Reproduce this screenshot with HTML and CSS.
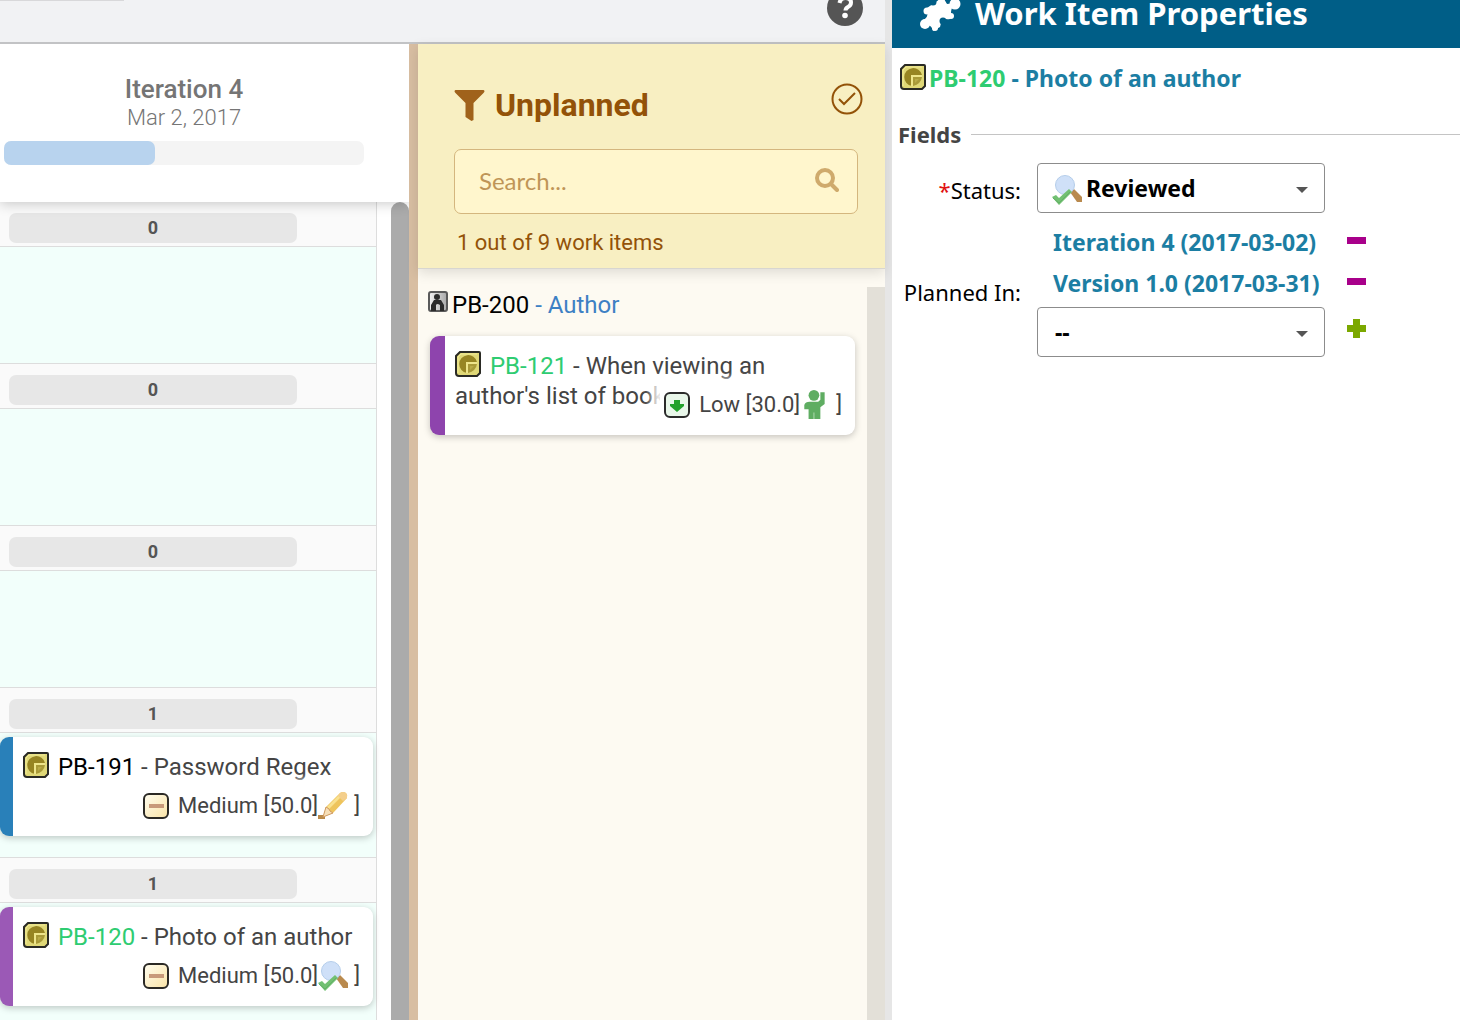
FILE: index.html
```html
<!DOCTYPE html>
<html lang="en">
<head>
  <meta charset="UTF-8">
  <meta name="viewport" content="width=device-width, initial-scale=1.0">
  <title>Plan - Work Item Properties</title>
  <link rel="stylesheet" href="styles.css">
</head>
<body>

  <!-- Shared icons -->
  <svg class="sprite" aria-hidden="true">
    <defs>
      <linearGradient id="sand" x1="0" y1="0" x2="1" y2="1">
        <stop offset="0" stop-color="#fffdf0"/>
        <stop offset="1" stop-color="#fae3a6"/>
      </linearGradient>
      <linearGradient id="silver" x1="0" y1="0" x2="1" y2="0">
        <stop offset="0" stop-color="#f4f4f4"/>
        <stop offset="1" stop-color="#a8a8a8"/>
      </linearGradient>
    </defs>
    <symbol id="story" viewBox="0 0 26 26">
      <path d="M5 1h19q1 0 1 1v20l-3 3H4q-3 0-3-3V5z" fill="#e0d877" stroke="#2a2a24" stroke-width="2"/>
      <path d="M3 22V6l3-3h16" fill="none" stroke="#f2ec9a" stroke-width="1"/>
      <path d="M12 22A9 9 0 1 1 22 11v1H12z" fill="#978523"/>
      <path d="M12 22V12h10" fill="none" stroke="#eee58b" stroke-width="2"/>
      <path d="M13 13h9q-1 7-9 9z" fill="#a99a38"/>
      <path d="M15 15h4l-4 4z" fill="#b9ab48"/>
    </symbol>
    <symbol id="medium" viewBox="0 0 26 26">
      <rect x="1" y="1" width="24" height="24" rx="5" fill="url(#sand)" stroke="#2b2925" stroke-width="2"/>
      <rect x="6" y="11" width="15" height="4" fill="#c8997a"/>
    </symbol>
    <symbol id="low" viewBox="0 0 26 26">
      <rect x="1" y="1" width="24" height="24" rx="5" fill="#e9f7ea" stroke="#2b2b2b" stroke-width="2"/>
      <path d="M10 8h6v4h4v2l-7 6-7-6v-2h4z" fill="#23a12c"/>
    </symbol>
    <symbol id="reviewed" viewBox="0 0 30 30">
      <path d="M18 17l4-3 8 8v5h-5z" fill="#b98a4e"/>
      <circle cx="13" cy="10" r="9.500" fill="#cfe0f8" stroke="#b4cdea" stroke-width="1"/>
      <path d="M0 22l4-2 3 3L17 14l3 3L7 30z" fill="#72c072"/>
      <path d="M1 23l6 5L18 17" fill="none" stroke="#62b066" stroke-width="1"/>
    </symbol>
    <symbol id="pencil" viewBox="0 0 30 28">
      <path d="M0 23h7v4H0z" fill="#b98a4a"/>
      <path d="M5 25l3-10L22 1q3-2 6 0 2 2 1 5L15 21z" fill="#eec45c"/>
      <path d="M9 15L22 2l3 1-14 14z" fill="#f9e18f"/>
      <path d="M5 25l3-10 3 2 1 2 3 2z" fill="#f6dfb8" stroke="#d09a62" stroke-width="1"/>
      <path d="M22 1q3-2 6 0 2 2 1 5l-4 3-5-5z" fill="#f4cf8c"/>
    </symbol>
    <symbol id="person" viewBox="0 0 20 28">
      <circle cx="9" cy="5" r="5" fill="#5fad62"/>
      <path d="M15 2h4v11l-4 3v11H4v-9H0v-4q1-3 5-3h8l2-2z" fill="#5fad62"/>
      <path d="M9 21v6" stroke="#a9d5aa" stroke-width="1"/>
    </symbol>
    <symbol id="actor" viewBox="0 0 20 22">
      <rect x="1" y="1" width="18" height="19" rx="2" fill="url(#silver)" stroke="#5a5a5a" stroke-width="2"/>
      <circle cx="9" cy="6" r="3" fill="#2c2c2c"/>
      <path d="M3 20v-6l3-5h7l3 5v6h-4v-6q-3-2-4 0v6z" fill="#2c2c2c"/>
    </symbol>
    <symbol id="puzzle" viewBox="0 0 42 32">
      <g fill="#fff">
        <path d="M8 9q6 3 7-3L23-4l5 8 8-1q-6 8-3 13l-2 3q-4 1-6-1-4 0-3 5l-1 4-7 4q-1-5-5-6L5 20q5-4 3-8z"/>
        <path d="M8 8l8 14 16-8L24-3z"/>
        <circle cx="6" cy="24" r="5"/>
        <circle cx="8" cy="11" r="3.500"/>
        <circle cx="36" cy="4" r="5.500"/>
        <circle cx="16" cy="28" r="3"/>
        <circle cx="32" cy="16" r="3"/>
      </g>
      <circle cx="14" cy="2" r="3.500" fill="#005e87"/>
      <circle cx="24" cy="21" r="3.500" fill="#005e87"/>
    </symbol>
    <symbol id="caret" viewBox="0 0 12 6">
      <path d="M0 0h12L6 6z" fill="#555"/>
    </symbol>
    <symbol id="minus" viewBox="0 0 19 7">
      <path d="M0 0h19v7H0z" fill="#a8008a"/>
    </symbol>
    <symbol id="plus" viewBox="0 0 19 19">
      <path d="M6 0h7v6h6v7h-6v6H6v-6H0V6h6z" fill="#7ba800"/>
    </symbol>
  </svg>

  <div class="page">
    <main class="planner">
      <header class="toolbar">
        <div class="tab"></div>
        <button class="help" type="button" aria-label="Help">
          <svg viewBox="0 0 36 36" width="36" height="36">
            <circle cx="18" cy="18" r="18" fill="#555"/>
            <path d="M12.500 13q1-5 6-5 5.500 0 5.500 4.500 0 3-3 4.500-2.500 1.500-2.500 3.500" fill="none" stroke="#fff" stroke-width="4"/>
            <circle cx="18" cy="25.500" r="2.800" fill="#fff"/>
          </svg>
        </button>
      </header>

      <div class="board">
        <section class="iteration">
          <header class="iteration-head">
            <h2>Iteration 4</h2>
            <time datetime="2017-03-02">Mar 2, 2017</time>
            <div class="progress"><div class="progress-done"></div></div>
          </header>

          <div class="lanes-wrap">
            <div class="lanes">
              <div class="lane-head"><span class="count">0</span></div>
              <div class="lane"></div>
              <div class="lane-head"><span class="count">0</span></div>
              <div class="lane"></div>
              <div class="lane-head"><span class="count">0</span></div>
              <div class="lane"></div>

              <div class="lane-head"><span class="count">1</span></div>
              <div class="lane">
                <article class="card blue">
                  <p class="card-title"><svg class="type"><use href="#story"/></svg> <a class="id" href="#">PB-191</a> - Password Regex</p>
                  <div class="details"><svg class="priority"><use href="#medium"/></svg><span>Medium [50.0]</span><svg class="state"><use href="#pencil"/></svg><span class="end">]</span></div>
                </article>
              </div>

              <div class="lane-head"><span class="count">1</span></div>
              <div class="lane">
                <article class="card violet">
                  <p class="card-title"><svg class="type"><use href="#story"/></svg> <a class="id green" href="#">PB-120</a> - Photo of an author</p>
                  <div class="details"><svg class="priority"><use href="#medium"/></svg><span>Medium [50.0]</span><svg class="state"><use href="#reviewed"/></svg><span class="end">]</span></div>
                </article>
              </div>
            </div>
            <div class="scrollbar"></div>
          </div>
        </section>

        <div class="splitter"></div>

        <section class="unplanned">
          <header class="unplanned-head">
            <div class="unplanned-title">
              <svg class="funnel" viewBox="0 0 30 31"><path d="M1 0h28q2 1 0 3L19 13v17l-2 1-6-4V13L1 3q-2-2 0-3z" fill="#a0621b"/></svg>
              <h2>Unplanned</h2>
              <button class="check" type="button" aria-label="Select all">
                <svg viewBox="0 0 32 32" width="32" height="32" fill="none" stroke="#935208" stroke-width="2">
                  <circle cx="16" cy="16" r="14.500"/>
                  <path d="M8 16l5 5L24 10"/>
                </svg>
              </button>
            </div>
            <label class="search">
              <input type="text" placeholder="Search..." aria-label="Search">
              <svg viewBox="0 0 24 24" fill="none" stroke="#cfaa6c" stroke-width="4">
                <circle cx="10" cy="10" r="8"/>
                <path d="M16 16l6 6" stroke-linecap="round"/>
              </svg>
            </label>
            <p class="summary">1 out of 9 work items</p>
          </header>

          <div class="unplanned-body">
            <div class="unplanned-list">
              <h3><svg class="actor"><use href="#actor"/></svg>PB-200 <a href="#">- Author</a></h3>
              <article class="card purple">
                <p class="card-title"><svg class="type"><use href="#story"/></svg> <a class="id green" href="#">PB-121</a> - When viewing an author's list of books</p>
                <div class="details"><svg class="priority"><use href="#low"/></svg><span>Low [30.0]</span><svg class="state"><use href="#person"/></svg><span class="end">]</span></div>
              </article>
            </div>
            <div class="track"></div>
          </div>
        </section>
      </div>
    </main>

    <aside class="properties">
      <header class="properties-head">
        <svg class="puzzle"><use href="#puzzle"/></svg>
        <h1>Work Item Properties</h1>
      </header>

      <div class="properties-body">
        <p class="item-title"><svg class="type"><use href="#story"/></svg><a href="#"><span class="green">PB-120</span> - Photo of an author</a></p>

        <h2 class="fields-title">Fields</h2>

        <form class="fields">
          <label for="status"><span class="required">*</span>Status:</label>
          <div class="select status">
            <svg class="state"><use href="#reviewed"/></svg>
            <select id="status">
              <option>Reviewed</option>
            </select>
            <svg class="caret"><use href="#caret"/></svg>
          </div>

          <label for="planned">Planned In:</label>
          <div class="planned">
            <div class="planned-row">
              <a href="#">Iteration 4 (2017-03-02)</a>
              <button type="button" aria-label="Remove Iteration 4"><svg class="minus"><use href="#minus"/></svg></button>
            </div>
            <div class="planned-row">
              <a href="#">Version 1.0 (2017-03-31)</a>
              <button type="button" aria-label="Remove Version 1.0"><svg class="minus"><use href="#minus"/></svg></button>
            </div>
            <div class="planned-row">
              <div class="select">
                <select id="planned">
                  <option>--</option>
                </select>
                <svg class="caret"><use href="#caret"/></svg>
              </div>
              <button type="button" aria-label="Add plan"><svg class="plus"><use href="#plus"/></svg></button>
            </div>
          </div>
        </form>
      </div>
    </aside>
  </div>

</body>
</html>
```

FILE: styles.css
```css
* {
  box-sizing: border-box;
}

body {
  margin: 0;
  font-family: Roboto, "Liberation Sans", sans-serif;
  font-size: 24px;
  color: #444;
  background: #fff;
}

h1, h2, h3, p {
  margin: 0;
}

a {
  color: inherit;
  text-decoration: none;
}

button {
  padding: 0;
  border: none;
  background: none;
  cursor: pointer;
}

svg {
  flex: none;
}

.sprite {
  position: absolute;
  width: 0;
  height: 0;
}

.page {
  display: grid;
  grid-template-columns: 885fr 7px 568fr;
  height: 100vh;
  overflow: hidden;
  background: #e6e6e6;
}

.planner {
  display: flex;
  flex-direction: column;
  min-width: 0;
  min-height: 0;
}

.toolbar {
  display: flex;
  flex: none;
  justify-content: space-between;
  align-items: flex-end;
  height: 44px;
  padding: 0 22px 16px 0;
  background: #f1f2f4;
  border-bottom: 2px solid #c2c3c5;
}

.tab {
  align-self: flex-start;
  width: 124px;
  border-bottom: 1px solid #d8d8da;
}

.help, .check {
  display: flex;
}

.board {
  display: grid;
  grid-template-columns: 409fr 9px 467fr;
  flex: 1;
  min-height: 0;
}

/* Iteration column */
.iteration {
  display: flex;
  flex-direction: column;
  min-width: 0;
  min-height: 0;
  overflow: hidden;
  background: #fff;
}

.iteration-head {
  position: relative;
  flex: none;
  height: 158px;
  padding: 30px 45px 0 4px;
  text-align: center;
  color: #757575;
  background: #fff;
  box-shadow: 0 2px 12px rgba(0, 0, 0, 0.2);
}

.iteration-head h2 {
  font-size: 26px;
  font-weight: 500;
  line-height: 30px;
}

.iteration-head time {
  display: block;
  font-size: 22px;
  font-weight: 300;
  line-height: 28px;
}

.progress {
  height: 24px;
  margin-top: 9px;
  border-radius: 7px;
  background: #f4f4f4;
}

.progress-done {
  width: 42%;
  height: 100%;
  border-radius: 7px;
  background: #b8d3ee;
}

.lanes-wrap {
  display: flex;
  flex: 1;
  min-height: 0;
  overflow: hidden;
}

.lanes {
  flex: 1;
  margin-right: 14px;
  border-right: 1px solid #ddd;
}

.scrollbar {
  width: 18px;
  border-radius: 9px 9px 0 0;
  background: #ababab;
}

.lane-head {
  height: 45px;
  padding: 11px 79px 0 9px;
  border-bottom: 1px solid #ddd;
  background: #fafafa;
}

.count {
  display: block;
  border-radius: 7px;
  background: #e7e7e7;
  font-size: 18px;
  font-weight: 700;
  line-height: 30px;
  text-align: center;
  color: #555;
}

.lane {
  min-height: 117px;
  padding: 4px 3px 21px 0;
  border-bottom: 1px solid #ddd;
  background: #f2fffb;
}

/* Cards */
.card {
  position: relative;
  height: 99px;
  padding: 15px 12px 0 10px;
  overflow: hidden;
  border-left: 13px solid;
  border-radius: 9px;
  background: #fff;
  box-shadow: 0 2px 7px rgba(0, 0, 0, 0.22);
}

.blue {
  border-color: #2980b9;
}

.violet {
  border-color: #9b59b6;
}

.purple {
  padding-left: 10px;
  border-left-width: 15px;
  border-color: #8e44ad;
}

.card-title {
  line-height: 30px;
}

.type {
  width: 26px;
  height: 26px;
  margin-right: 3px;
  vertical-align: -3px;
}

.id {
  color: #000;
}

.green {
  color: #2ecc71;
}

/* The white glow fades out a title that runs under the details */
.details {
  position: absolute;
  right: 13px;
  bottom: 12px;
  display: flex;
  align-items: center;
  padding-left: 4px;
  font-size: 22px;
  line-height: 36px;
  background: #fff;
  box-shadow: 0 0 8px 8px rgba(255, 255, 255, 0.9);
}

.priority {
  width: 26px;
  height: 26px;
  margin-right: 9px;
}

.state {
  width: 30px;
  height: 30px;
}

.end {
  margin-left: 6px;
}

.splitter {
  background: #d8bea2;
}

/* Unplanned column */
.unplanned {
  display: flex;
  flex-direction: column;
  min-width: 0;
  background: #fdfaf2;
}

.unplanned-head {
  padding: 39px 27px 10px 36px;
  color: #935208;
  background: #f8efc2;
  border-bottom: 1px solid #d8d6d0;
  box-shadow: 0 4px 12px rgba(0, 0, 0, 0.12);
}

.unplanned-title {
  display: flex;
  align-items: center;
  height: 44px;
}

.unplanned-title h2 {
  font-size: 32px;
  font-weight: 700;
}

.funnel {
  width: 31px;
  height: 31px;
  margin-right: 10px;
}

.check {
  align-self: flex-start;
  margin-left: auto;
  margin-right: -5px;
}

.search {
  position: relative;
  display: block;
  margin-top: 22px;
}

.search input {
  display: block;
  width: 100%;
  height: 65px;
  padding: 0 60px 2px 24px;
  border: 1px solid #d4b67e;
  border-radius: 7px;
  font-family: Lato, sans-serif;
  font-size: 24px;
  color: #935208;
  background: #fff6cd;
}

.search input::placeholder {
  color: #bf9557;
}

.search svg {
  position: absolute;
  right: 19px;
  top: 19px;
  width: 24px;
  height: 24px;
}

.summary {
  padding: 13px 3px 0;
  font-size: 22px;
  line-height: 31px;
}

.unplanned-body {
  display: flex;
  flex: 1;
}

.unplanned-list {
  flex: 1;
  padding: 19px 12px 0;
}

.unplanned-list h3 {
  font-size: 24px;
  font-weight: 400;
  line-height: 34px;
  color: #000;
}

.unplanned-list h3 a {
  color: #3d80c4;
}

.unplanned-list .card {
  margin-top: 14px;
}

.actor {
  width: 20px;
  height: 22px;
  margin: 0 4px 0 -2px;
}

.track {
  width: 18px;
  margin-top: 18px;
  background: #e3e0d8;
}

/* Properties panel */
.properties {
  grid-column: 3;
  min-width: 0;
  font-family: "Noto Sans", sans-serif;
  color: #000;
  background: #fff;
}

.properties-head {
  display: flex;
  height: 48px;
  padding-left: 27px;
  color: #fff;
  background: #005e87;
}

.properties-head h1 {
  margin-left: 14px;
  font-size: 31px;
  line-height: 26px;
}

.puzzle {
  width: 42px;
  height: 32px;
}

.properties-body {
  padding: 14px 0 0 6px;
}

.item-title {
  padding-left: 2px;
  font-size: 23px;
  font-weight: 700;
  line-height: 32px;
  color: #1c7ea3;
}

.fields-title {
  display: flex;
  align-items: center;
  margin-top: 25px;
  font-size: 22px;
  line-height: 30px;
  color: #444;
}

.fields-title::after {
  content: "";
  flex: 1;
  height: 1px;
  margin-left: 10px;
  background: #c4c4c4;
}

.fields {
  display: grid;
  grid-template-columns: 123px 1fr;
  column-gap: 16px;
  row-gap: 9px;
  align-items: center;
  margin-top: 14px;
}

.fields label {
  padding-top: 4px;
  font-size: 22px;
  text-align: right;
}

.required {
  color: #e01010;
}

.select {
  position: relative;
  width: 288px;
}

.select select {
  display: block;
  width: 100%;
  height: 50px;
  padding: 0 40px 0 17px;
  appearance: none;
  border: 1px solid #8c8c8c;
  border-radius: 4px;
  font-family: inherit;
  font-size: 23px;
  font-weight: 700;
  color: #000;
  background: #fff;
}

.status select {
  padding-left: 48px;
}

.select .state {
  position: absolute;
  left: 15px;
  top: 12px;
}

.caret {
  position: absolute;
  right: 17px;
  top: 24px;
  width: 12px;
  height: 6px;
}

.planned-row {
  display: flex;
  align-items: center;
  gap: 22px;
}

.planned-row > a {
  width: 288px;
  padding-left: 16px;
  font-size: 23px;
  font-weight: 700;
  line-height: 41px;
  white-space: nowrap;
  color: #1c7ea3;
}

.planned-row .select {
  margin-top: 3px;
}

.planned-row button {
  display: flex;
  padding-bottom: 5px;
}

.minus {
  width: 19px;
  height: 7px;
}

.plus {
  width: 19px;
  height: 19px;
}
```
